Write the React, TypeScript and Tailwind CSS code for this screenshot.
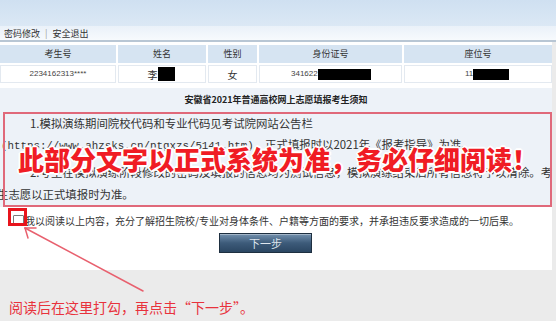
import React from "react";

const cjk = { fontFamily: '"Noto Sans CJK SC", "Noto Sans", sans-serif' };

export default function App() {
  return (
    <div
      className="relative w-[556px] h-[321px] overflow-hidden bg-[#ebebeb] text-[#333]"
      style={cjk}
    >
      {/* banner */}
      <div className="h-[26px] bg-gradient-to-b from-[#cfe0f1] to-[#dbe8f5]" />
      {/* menu bar */}
      <div className="h-[14px] bg-gradient-to-b from-[#eaf1f9] to-[#f7fafd] flex items-center pl-[4px] text-[9px] leading-none text-[#333]">
        <span>密码修改</span>
        <span className="mx-[5px] text-[#999]">|</span>
        <span>安全退出</span>
      </div>
      <div className="h-[2px] bg-[#b8c6d4]" />

      <div className="w-[552px] bg-white pt-[3px]">
        {/* info table */}
        <div className="grid grid-cols-[116px_88px_49px_143px_1fr] gap-[2px] text-[9px]">
          <div className="h-[18px] bg-[#d6e4f2] flex items-center justify-center">考生号</div>
          <div className="h-[18px] bg-[#d6e4f2] flex items-center justify-center">姓名</div>
          <div className="h-[18px] bg-[#d6e4f2] flex items-center justify-center">性别</div>
          <div className="h-[18px] bg-[#d6e4f2] flex items-center justify-center">身份证号</div>
          <div className="h-[18px] bg-[#d6e4f2] flex items-center justify-center">座位号</div>

          <div className="h-[18px] border border-[#e3e9f0] flex items-center justify-center text-[8px] text-[#444]" style={{ fontFamily: '"Liberation Sans", sans-serif' }}>
            2234162313****
          </div>
          <div className="h-[18px] border border-[#e3e9f0] flex items-center justify-center text-[10px]">
            <span className="ml-[-2px]">李</span>
            <span className="inline-block w-[17px] h-[14px] bg-black" />
          </div>
          <div className="h-[18px] border border-[#e3e9f0] flex items-center justify-center text-[10px]">女</div>
          <div className="h-[18px] border border-[#e3e9f0] flex items-center pl-[31px] text-[8px] text-[#444]" style={{ fontFamily: '"Liberation Sans", sans-serif' }}>
            <span>341622</span>
            <span className="inline-block w-[53px] h-[11px] bg-black" />
          </div>
          <div className="h-[18px] border border-[#e3e9f0] flex items-center pl-[60px] text-[8px] text-[#444]" style={{ fontFamily: '"Liberation Sans", sans-serif' }}>
            <span>11</span>
            <span className="inline-block w-[36px] h-[11px] bg-black" />
          </div>
        </div>

        <div className="h-[5px]" />

        {/* notice */}
        <div className="bg-[#edf2f8] pb-[1px]">
          <div className="h-[23px] flex items-center justify-center text-[9px] font-bold text-[#222]">
            安徽省2021年普通高校网上志愿填报考生须知
          </div>
          <div className="pt-[1px] text-[11.4px] text-[#333] whitespace-nowrap">
            <div className="pl-[30px] h-[22px] leading-[22px]">1.模拟演练期间院校代码和专业代码见考试院网站公告栏</div>
            <div className="pl-[1px] h-[20px] leading-[20px]">
              <span className="text-[10.8px]" style={{ fontFamily: '"Liberation Mono", monospace' }}>
                (https://www.ahzsks.cn/ptgxzs/5141.htm)
              </span>
              <span>，正式填报时以2021年《报考指导》为准。</span>
            </div>
            <div className="pl-[30px] pt-[6px] leading-[24px]">2.考生在模拟演练阶段修改的密码及填报的信息均为测试信息，模拟演练结束后所有信息将予以清除。考</div>
            <div className="ml-[-3px] mt-[-2px] leading-[24px]">生志愿以正式填报时为准。</div>
          </div>
        </div>

        {/* agree row */}
        <div className="mt-[5px] h-[16px] flex items-center pl-[13px] text-[10px] text-[#333] whitespace-nowrap">
          <span className="inline-block w-[11px] h-[11px] border border-[#7a7a7a] bg-white rounded-[1px]" />
          <span className="ml-[1px]">我以阅读以上内容，充分了解招生院校/专业对身体条件、户籍等方面的要求，并承担违反要求造成的一切后果。</span>
        </div>

        {/* button */}
        <div className="mt-[5px] ml-[219px] w-[93px] h-[20px] border border-[#1e2f40] bg-gradient-to-b from-[#7391ae] via-[#3d5b7a] to-[#2b4662] flex items-center justify-center text-[11px] text-[#dfe6ee] shadow-[inset_0_1px_0_rgba(255,255,255,0.35)]">
          下一步
        </div>
        <div className="h-[17px]" />
      </div>

      {/* bottom annotation text */}
      <div className="pt-[27px] pl-[9px] text-[14px] leading-[20px] text-[#e8323c] whitespace-nowrap">
        阅读后在这里打勾，再点击“下一步”。
      </div>

      {/* overlays: annotation red box */}
      <div className="absolute left-[3px] top-[112px] w-[549px] h-[95px] border-2 border-[#e0697a]" />
      {/* big red text */}
      <div className="absolute left-[18px] top-[146px] text-[26px] leading-[26px] font-black text-[#f01c24] whitespace-nowrap [text-shadow:1px_1px_0_#fff,-1px_-1px_0_#fff,1px_-1px_0_#fff,-1px_1px_0_#fff,2px_0_0_#fff,-2px_0_0_#fff,0_2px_0_#fff,0_-2px_0_#fff]">
        此部分文字以正式系统为准，务必仔细阅读！
      </div>
      {/* checkbox highlight */}
      <div className="absolute left-[8px] top-[208px] w-[19px] h-[18px] border-[3px] border-[#e8141c]" />
      {/* arrow */}
      <svg className="absolute left-0 top-0" width="556" height="321" viewBox="0 0 556 321">
        <g stroke="#e8606e" strokeWidth="1.5" fill="none" strokeLinecap="round">
          <line x1="143" y1="291" x2="25" y2="228" />
          <line x1="25" y1="228" x2="36" y2="228" />
          <line x1="25" y1="228" x2="28" y2="238" />
        </g>
      </svg>
    </div>
  );
}
